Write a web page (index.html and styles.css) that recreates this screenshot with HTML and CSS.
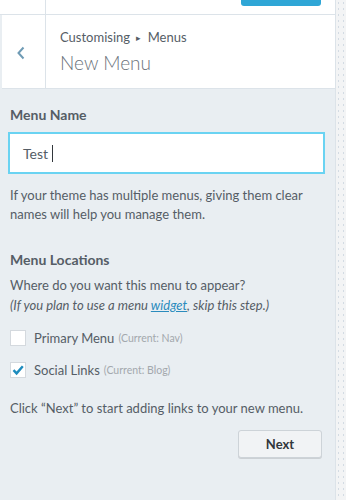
FILE: index.html
```html
<!DOCTYPE html>
<html>
<head>
  <title>New Menu</title>
  <link rel="stylesheet" href="styles.css">
</head>
<body>
  <div class="shell">
    <div class="sidebar">
      <div class="topbar">
        <div class="close-area"></div>
        <div class="save-btn"></div>
      </div>

      <div class="section-header">
        <div class="back-btn">
          <svg width="8" height="14" viewBox="0 0 8 14">
            <path d="M6.5 1.5 L1.5 7 L6.5 12.5" fill="none" stroke="#6f9bb5" stroke-width="2"/>
          </svg>
        </div>
        <div class="section-title">
          <div class="crumb">Customising <span class="crumb-arrow">&#9656;</span> Menus</div>
          <div class="title">New Menu</div>
        </div>
      </div>

      <div class="panel">
        <label class="field-label" for="menu-name">Menu Name</label>
        <div class="name-input">
          <span class="name-value">Test</span><span class="caret"></span>
        </div>
        <p class="help">If your theme has multiple menus, giving them clear names will help you manage them.</p>

        <h3 class="field-label locations-label">Menu Locations</h3>
        <p class="desc">Where do you want this menu to appear?</p>
        <p class="desc note">(If you plan to use a menu <a href="#" class="link">widget</a>, skip this step.)</p>

        <div class="location">
          <span class="checkbox"></span>
          <span class="location-name">Primary Menu</span>
          <span class="current">(Current: Nav)</span>
        </div>
        <div class="location">
          <span class="checkbox">
            <svg width="14" height="14" viewBox="0 0 14 14">
              <path d="M2.5 7.2 L5.6 10.4 L11.8 3.2" fill="none" stroke="#1e8cbe" stroke-width="2.4"/>
            </svg>
          </span>
          <span class="location-name">Social Links</span>
          <span class="current">(Current: Blog)</span>
        </div>

        <p class="desc next-hint">Click &ldquo;Next&rdquo; to start adding links to your new menu.</p>

        <div class="actions">
          <button class="next-btn">Next</button>
        </div>
      </div>
    </div>
    <div class="preview-edge"></div>
  </div>
</body>
</html>
```

FILE: styles.css
```css
:root {
  --text-color: #555d66;
  --text-dark: #32373c;
  --panel-bg: #e9eef2;
  --border-color: #dce3e9;
  --accent: #0085ba;
  --focus: #6ad3f2;
}

* {
  margin: 0;
  padding: 0;
  box-sizing: border-box;
}

body {
  width: 346px;
  height: 500px;
  font-family: 'Lato', sans-serif;
  font-size: 13px;
  color: var(--text-color);
  background-color: var(--panel-bg);
  overflow: hidden;
}

.shell {
  display: flex;
  height: 500px;
}

.sidebar {
  width: 336px;
  background-color: var(--panel-bg);
  border-right: 1px solid var(--border-color);
}

.preview-edge {
  flex: 1;
  background-color: #f3f4f5;
  background-image: radial-gradient(circle, #d3dbe3 0.7px, transparent 0.8px);
  background-size: 5px 6px;
}

/* top bar with save button, cut off by scroll */
.topbar {
  display: flex;
  height: 15px;
  background-color: #fff;
  border-bottom: 1px solid var(--border-color);
  overflow: hidden;
}

.close-area {
  width: 46px;
  border-right: 1px solid var(--border-color);
}

.save-btn {
  width: 80px;
  height: 6px;
  margin-left: auto;
  margin-right: 14px;
  background-color: #2fa6d6;
  border-radius: 0 0 3px 3px;
}

/* section header */
.section-header {
  display: flex;
  height: 74px;
  margin-left: 2px;
  background-color: #fff;
  border-bottom: 1px solid var(--border-color);
}

.back-btn {
  width: 44px;
  display: flex;
  align-items: center;
  justify-content: center;
  border-right: 1px solid var(--border-color);
  padding: 2px 6px 0 0;
}

.section-title {
  padding: 14px 0 0 14px;
}

.crumb {
  font-size: 13px;
  line-height: 17px;
  color: var(--text-color);
}

.crumb-arrow {
  font-size: 9px;
  margin: 0 3px;
  vertical-align: 1px;
}

.title {
  font-size: 19px;
  font-weight: 300;
  line-height: 26px;
  margin-top: 4px;
  color: #6b737b;
}

/* panel body */
.panel {
  padding: 17px 10px 0 10px;
}

.field-label {
  display: block;
  font-size: 14px;
  font-weight: 700;
  line-height: 18px;
  color: var(--text-color);
  margin-bottom: 8px;
}

.name-input {
  display: flex;
  align-items: center;
  height: 42px;
  margin-left: -2px;
  padding: 0 13px;
  background-color: #fff;
  border: 2px solid var(--focus);
  font-size: 14px;
  color: var(--text-color);
}

.caret {
  width: 1px;
  height: 17px;
  margin-left: 4px;
  background-color: var(--text-dark);
}

.help {
  margin-top: 12px;
  line-height: 19px;
}

.locations-label {
  margin-top: 27px;
  margin-bottom: 6px;
}

.desc {
  line-height: 20px;
}

.note {
  font-style: italic;
}

.link {
  color: #2a8bbd;
}

.location {
  display: flex;
  align-items: center;
  height: 18px;
  margin-top: 14px;
}

.checkbox {
  display: flex;
  align-items: center;
  justify-content: center;
  width: 16px;
  height: 16px;
  background-color: #fff;
  border: 1px solid #d4d9de;
  margin-right: 8px;
}

.location-name {
  font-size: 13px;
}

.current {
  font-size: 10.5px;
  color: #a3a8ad;
  margin-left: 4px;
}

.next-hint {
  margin-top: 19px;
}

.actions {
  display: flex;
  justify-content: flex-end;
  margin-top: 12px;
  padding-right: 3px;
}

.next-btn {
  width: 84px;
  height: 28px;
  font-family: 'Lato', sans-serif;
  font-size: 13px;
  font-weight: 700;
  color: var(--text-dark);
  background-color: #f1f3f5;
  border: 1px solid #cdd3d8;
  border-radius: 3px;
  box-shadow: 0 1px 0 #ccd0d4;
}
```
